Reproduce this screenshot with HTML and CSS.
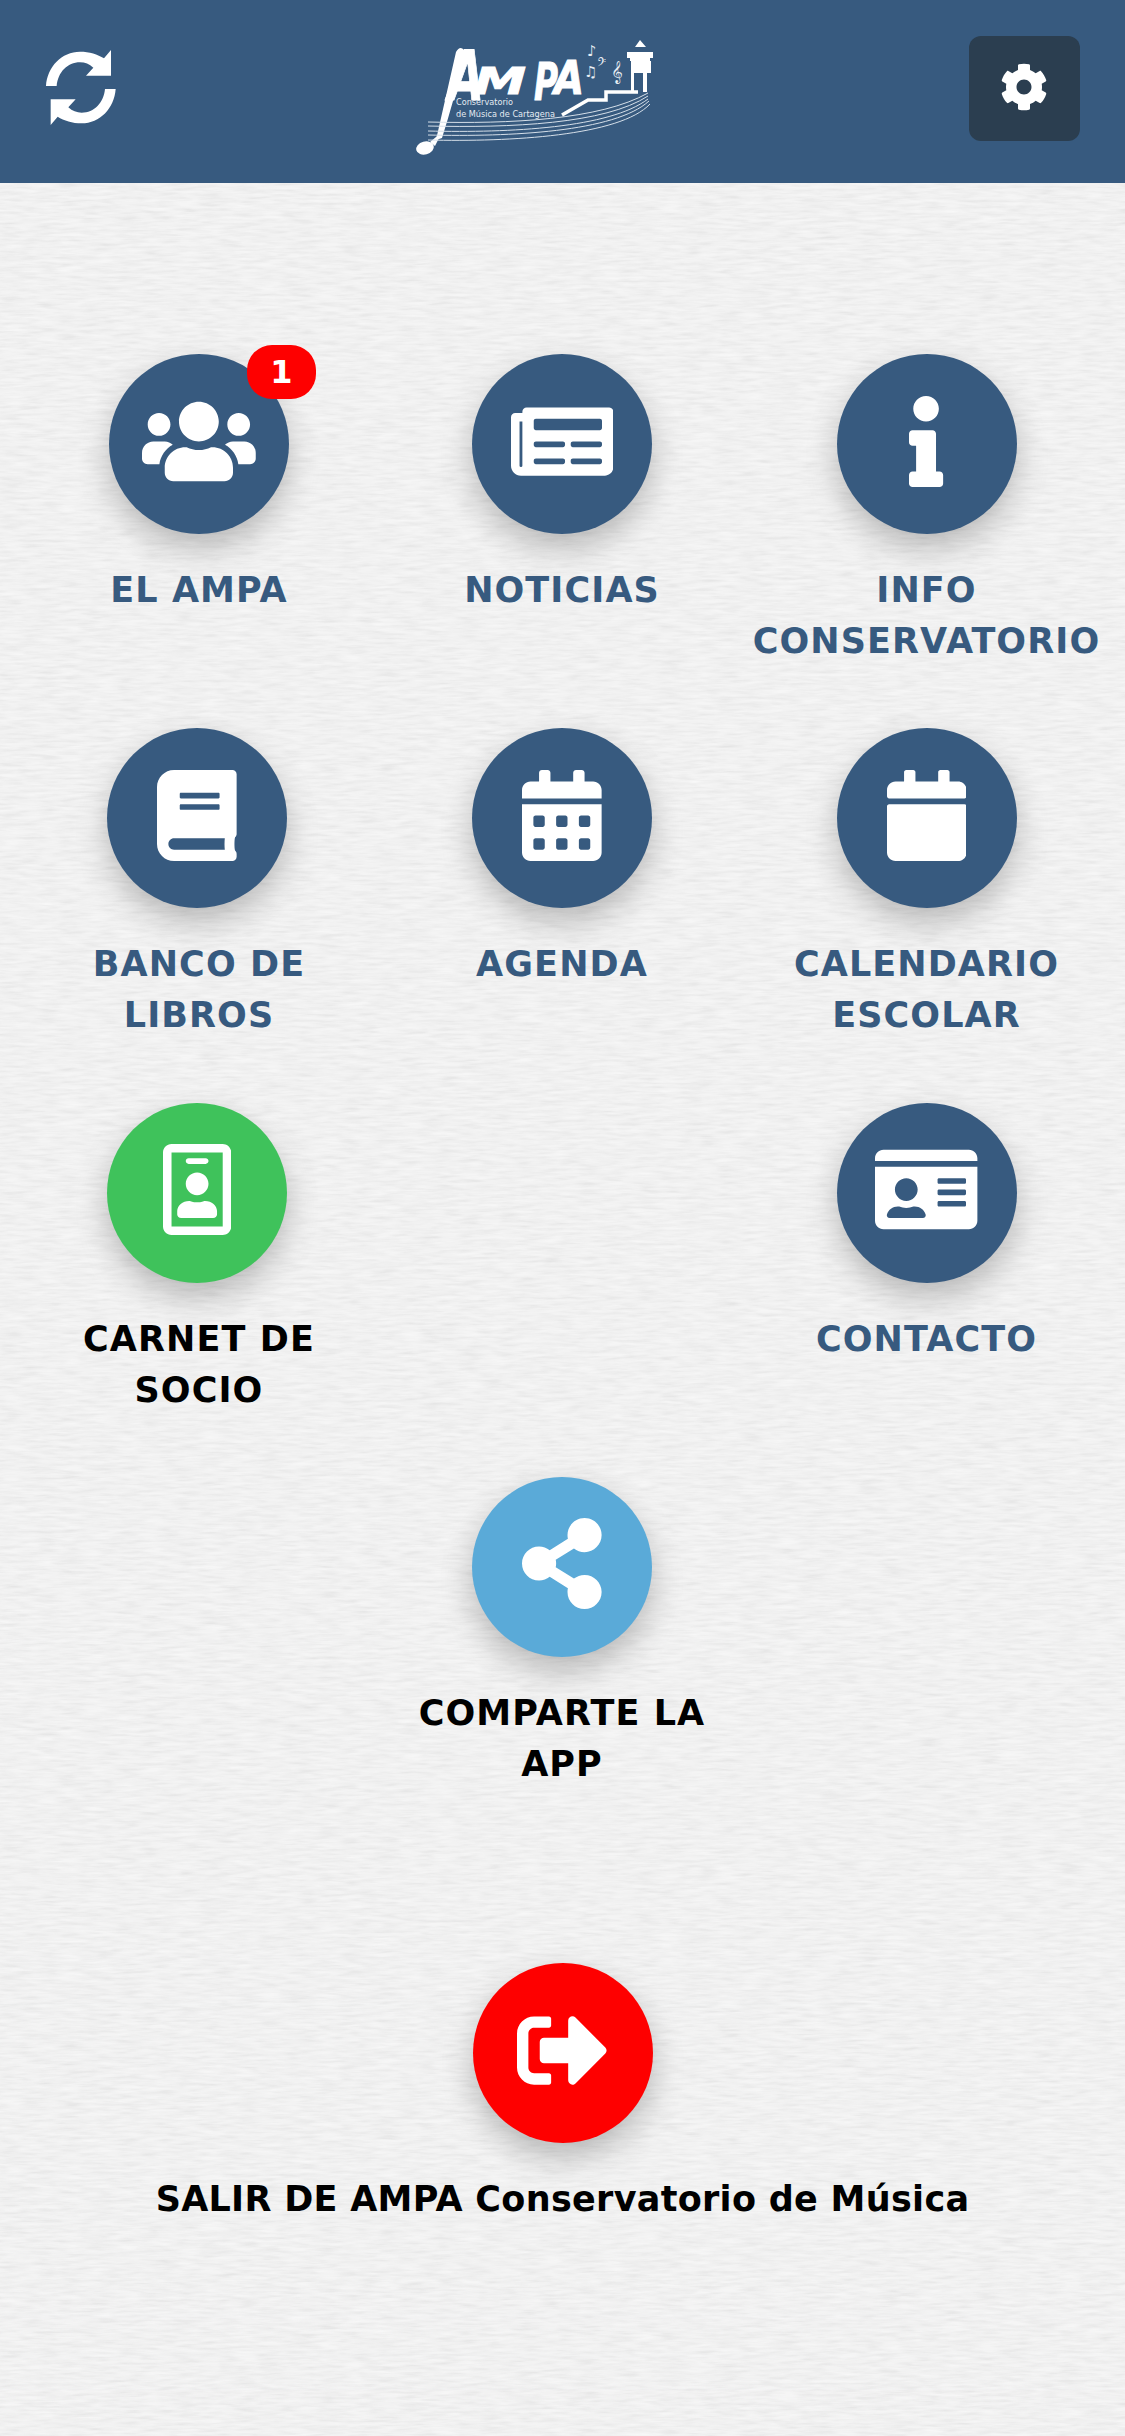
FILE: index.html
```html
<!doctype html>
<html>
<head>
<title>AMPA Conservatorio</title>
<meta charset="utf-8">
<meta name="viewport" content="width=device-width, initial-scale=1">
<link rel="stylesheet" href="styles.css">
</head>
<body>
<header class="topbar">
	<svg class="refresh" viewBox="0 0 300 300">
		<path d="M48 153C52 95 95 50 150 50C178 50 203 58 222 70L243 45V122H168L190 98C178 87 165 82 150 82C112 82 84 112 80 153Z"/>
		<path transform="rotate(180 152.5 157.5)" d="M48 153C52 95 95 50 150 50C178 50 203 58 222 70L243 45V122H168L190 98C178 87 165 82 150 82C112 82 84 112 80 153Z"/>
	</svg>
	<svg class="logo" viewBox="0 0 300 150">
		<path class="logo-fill" d="M76 32 Q80 25 84 30 L90 42 L82 46 Q74 80 62 118 L56 120 Q66 76 76 32z"/>
		<ellipse class="logo-fill" cx="45" cy="128" rx="9" ry="6.5" transform="rotate(-15 45 128)"/>
		<path class="logo-fill" d="M62 112 L55 126 L50 122z"/>
		<text class="logo-big" x="68" y="80" font-size="70" textLength="36" lengthAdjust="spacingAndGlyphs">A</text>
		<text class="logo-big" x="94" y="74" font-size="38" textLength="52" lengthAdjust="spacingAndGlyphs">M</text>
		<text class="logo-big" x="154" y="80" font-size="52" textLength="24" lengthAdjust="spacingAndGlyphs">P</text>
		<text class="logo-big" x="174" y="74" font-size="46" textLength="30" lengthAdjust="spacingAndGlyphs">A</text>
		<text class="logo-small" x="76" y="85" textLength="57" lengthAdjust="spacingAndGlyphs">Conservatorio</text>
		<text class="logo-small" x="76" y="97" textLength="99" lengthAdjust="spacingAndGlyphs">de Música de Cartagena</text>
		<g class="logo-staff">
			<path d="M48 102 C130 104 220 100 268 73"/>
			<path d="M48 106 C130 108 225 104 268 76"/>
			<path d="M48 111 C130 113 230 108 268 79"/>
			<path d="M48 115 C130 117 235 112 269 81"/>
			<path d="M48 120 C130 122 240 116 270 84"/>
		</g>
		<path class="logo-stair" d="M182 95 L208 80 L226 80 L226 72 L258 72"/>
		<path class="logo-fill" d="M255 27 L260 20 L266 27z M247 32 H273 V38 H270 V41 H271 V53 H267 V72 H263 V53 H254 V72 H251 V41 H250 V38 H247z"/>
		<text class="logo-note" x="207" y="36" font-size="15">♪</text>
		<text class="logo-note" x="204" y="57" font-size="15">♫</text>
		<text class="logo-note" x="217" y="48" font-size="14">𝄢</text>
		<text class="logo-note" x="231" y="58" font-size="20">𝄞</text>
	</svg>
	<button class="gear-btn" type="button">
		<svg class="gear" viewBox="0 0 512 512"><path d="M487.4 315.7l-42.6-24.6c4.3-23.2 4.3-47 0-70.2l42.6-24.6c4.9-2.8 7.1-8.6 5.5-14-11.1-35.6-30-67.8-54.7-94.6-3.8-4.1-10-5.1-14.8-2.3L380.8 110c-17.9-15.4-38.5-27.3-60.8-35.1V25.8c0-5.6-3.9-10.5-9.4-11.7-36.7-8.2-74.3-7.8-109.2 0-5.5 1.2-9.4 6.1-9.4 11.7V75c-22.2 7.9-42.8 19.8-60.8 35.1L88.7 85.5c-4.9-2.8-11-1.9-14.8 2.3-24.7 26.7-43.6 58.9-54.7 94.6-1.7 5.4.6 11.2 5.5 14L67.3 221c-4.3 23.2-4.3 47 0 70.2l-42.6 24.6c-4.9 2.8-7.1 8.6-5.5 14 11.1 35.6 30 67.8 54.7 94.6 3.8 4.1 10 5.1 14.8 2.3l42.6-24.6c17.9 15.4 38.5 27.3 60.8 35.1v49.2c0 5.6 3.9 10.5 9.4 11.7 36.7 8.2 74.3 7.8 109.2 0 5.5-1.2 9.4-6.1 9.4-11.7v-49.2c22.2-7.9 42.8-19.8 60.8-35.1l42.6 24.6c4.9 2.8 11 1.9 14.8-2.3 24.7-26.7 43.6-58.9 54.7-94.6 1.5-5.5-.7-11.3-5.6-14.1zM256 336c-44.1 0-80-35.9-80-80s35.9-80 80-80 80 35.9 80 80-35.9 80-80 80z"/></svg>
	</button>
</header>

<main class="menu">
	<div class="grid">
		<div class="tile">
			<div class="circle">
				<svg class="icon" viewBox="0 0 640 512"><path d="M96 224c35.3 0 64-28.7 64-64s-28.7-64-64-64-64 28.7-64 64 28.7 64 64 64zm448 0c35.3 0 64-28.7 64-64s-28.7-64-64-64-64 28.7-64 64 28.7 64 64 64zm32 32h-64c-17.6 0-33.5 7.1-45.1 18.6 40.3 22.1 68.9 62 75.1 109.4h66c17.7 0 32-14.3 32-32v-32c0-35.3-28.7-64-64-64zm-256 0c61.9 0 112-50.1 112-112S381.9 32 320 32 208 82.1 208 144s50.1 112 112 112zm76.8 32h-8.3c-20.8 10-43.9 16-68.5 16s-47.6-6-68.5-16h-8.3C179.6 288 128 339.6 128 403.2V432c0 26.5 21.5 48 48 48h288c26.5 0 48-21.5 48-48v-28.8c0-63.6-51.6-115.2-115.2-115.2zm-223.7-13.4C161.5 263.1 145.6 256 128 256H64c-35.3 0-64 28.7-64 64v32c0 17.7 14.3 32 32 32h65.9c6.3-47.4 34.9-87.3 75.2-109.4z"/></svg>
				<span class="badge">1</span>
			</div>
			<p class="label">EL AMPA</p>
		</div>
		<div class="tile">
			<div class="circle">
				<svg class="icon" viewBox="0 0 576 512"><path d="M552 64H88c-13.255 0-24 10.745-24 24v8H24c-13.255 0-24 10.745-24 24v272c0 30.928 25.072 56 56 56h472c26.51 0 48-21.49 48-48V88c0-13.255-10.745-24-24-24zM56 400a8 8 0 0 1-8-8V144h16v248a8 8 0 0 1-8 8zm236-16H140c-6.627 0-12-5.373-12-12v-8c0-6.627 5.373-12 12-12h152c6.627 0 12 5.373 12 12v8c0 6.627-5.373 12-12 12zm208 0H348c-6.627 0-12-5.373-12-12v-8c0-6.627 5.373-12 12-12h152c6.627 0 12 5.373 12 12v8c0 6.627-5.373 12-12 12zm-208-96H140c-6.627 0-12-5.373-12-12v-8c0-6.627 5.373-12 12-12h152c6.627 0 12 5.373 12 12v8c0 6.627-5.373 12-12 12zm208 0H348c-6.627 0-12-5.373-12-12v-8c0-6.627 5.373-12 12-12h152c6.627 0 12 5.373 12 12v8c0 6.627-5.373 12-12 12zm0-96H140c-6.627 0-12-5.373-12-12v-40c0-6.627 5.373-12 12-12h360c6.627 0 12 5.373 12 12v40c0 6.627-5.373 12-12 12z"/></svg>
			</div>
			<p class="label">NOTICIAS</p>
		</div>
		<div class="tile">
			<div class="circle">
				<svg class="icon" viewBox="0 0 192 512"><path d="M20 424.229h20V279.771H20c-11.046 0-20-8.954-20-20V212c0-11.046 8.954-20 20-20h112c11.046 0 20 8.954 20 20v212.229h20c11.046 0 20 8.954 20 20V492c0 11.046-8.954 20-20 20H20c-11.046 0-20-8.954-20-20v-47.771c0-11.046 8.954-20 20-20zM96 0C56.235 0 24 32.235 24 72s32.235 72 72 72 72-32.235 72-72S135.764 0 96 0z"/></svg>
			</div>
			<p class="label">INFO<br>CONSERVATORIO</p>
		</div>

		<div class="tile">
			<div class="circle nudge">
				<svg class="icon" viewBox="0 0 448 512"><path d="M448 360V24c0-13.3-10.7-24-24-24H96C43 0 0 43 0 96v320c0 53 43 96 96 96h328c13.3 0 24-10.7 24-24v-16c0-7.5-3.5-14.3-8.9-18.7-4.2-15.4-4.2-59.3 0-74.7 5.4-4.3 8.9-11.1 8.9-18.6zM128 134c0-3.3 2.7-6 6-6h212c3.3 0 6 2.7 6 6v20c0 3.3-2.7 6-6 6H134c-3.3 0-6-2.7-6-6v-20zm0 64c0-3.3 2.7-6 6-6h212c3.3 0 6 2.7 6 6v20c0 3.3-2.7 6-6 6H134c-3.3 0-6-2.7-6-6v-20zm253.4 250H96c-17.7 0-32-14.3-32-32 0-17.6 14.4-32 32-32h285.4c-1.9 17.1-1.9 46.9 0 64z"/></svg>
			</div>
			<p class="label">BANCO DE<br>LIBROS</p>
		</div>
		<div class="tile">
			<div class="circle">
				<svg class="icon" viewBox="0 0 448 512"><path d="M0 464c0 26.5 21.5 48 48 48h352c26.5 0 48-21.5 48-48V192H0v272zm320-196c0-6.6 5.4-12 12-12h40c6.6 0 12 5.4 12 12v40c0 6.6-5.4 12-12 12h-40c-6.6 0-12-5.4-12-12v-40zm0 128c0-6.6 5.4-12 12-12h40c6.6 0 12 5.4 12 12v40c0 6.6-5.4 12-12 12h-40c-6.6 0-12-5.4-12-12v-40zM192 268c0-6.6 5.4-12 12-12h40c6.6 0 12 5.4 12 12v40c0 6.6-5.4 12-12 12h-40c-6.6 0-12-5.4-12-12v-40zm0 128c0-6.6 5.4-12 12-12h40c6.6 0 12 5.4 12 12v40c0 6.6-5.4 12-12 12h-40c-6.6 0-12-5.4-12-12v-40zM64 268c0-6.6 5.4-12 12-12h40c6.6 0 12 5.4 12 12v40c0 6.6-5.4 12-12 12H76c-6.6 0-12-5.4-12-12v-40zm0 128c0-6.6 5.4-12 12-12h40c6.6 0 12 5.4 12 12v40c0 6.6-5.4 12-12 12H76c-6.6 0-12-5.4-12-12v-40zM400 64h-48V16c0-8.8-7.2-16-16-16h-32c-8.8 0-16 7.2-16 16v48H160V16c0-8.8-7.2-16-16-16h-32c-8.8 0-16 7.2-16 16v48H48C21.5 64 0 85.5 0 112v48h448v-48c0-26.5-21.5-48-48-48z"/></svg>
			</div>
			<p class="label">AGENDA</p>
		</div>
		<div class="tile">
			<div class="circle">
				<svg class="icon" viewBox="0 0 448 512"><path d="M12 192h424c6.6 0 12 5.4 12 12v260c0 26.5-21.5 48-48 48H48c-26.5 0-48-21.5-48-48V204c0-6.6 5.4-12 12-12zm436-44v-36c0-26.5-21.5-48-48-48h-48V12c0-6.6-5.4-12-12-12h-40c-6.6 0-12 5.4-12 12v52H160V12c0-6.6-5.4-12-12-12h-40c-6.6 0-12 5.4-12 12v52H48C21.5 64 0 85.5 0 112v36c0 6.6 5.4 12 12 12h424c6.6 0 12-5.4 12-12z"/></svg>
			</div>
			<p class="label">CALENDARIO<br>ESCOLAR</p>
		</div>

		<div class="tile">
			<div class="circle nudge green">
				<svg class="icon" viewBox="0 0 384 512"><path d="M336 0H48C21.5 0 0 21.5 0 48v416c0 26.5 21.5 48 48 48h288c26.5 0 48-21.5 48-48V48c0-26.5-21.5-48-48-48zm0 464H48V48h288v416zM144 112h96c8.8 0 16-7.2 16-16s-7.2-16-16-16h-96c-8.8 0-16 7.2-16 16s7.2 16 16 16zm48 176c35.3 0 64-28.7 64-64s-28.7-64-64-64-64 28.7-64 64 28.7 64 64 64zm-89.6 128h179.2c12.4 0 22.4-8.6 22.4-19.2v-19.2c0-31.8-30.1-57.6-67.2-57.6-10.8 0-18.7 8-44.8 8-26.9 0-33.4-8-44.8-8-37.1 0-67.2 25.8-67.2 57.6v19.2c0 10.6 10 19.2 22.4 19.2z"/></svg>
			</div>
			<p class="label dark">CARNET DE<br>SOCIO</p>
		</div>
		<div class="tile"></div>
		<div class="tile">
			<div class="circle">
				<svg class="icon" viewBox="0 0 576 512"><path d="M528 32H48C21.5 32 0 53.5 0 80v16h576V80c0-26.5-21.5-48-48-48zM0 432c0 26.5 21.5 48 48 48h480c26.5 0 48-21.5 48-48V128H0v304zm352-232c0-4.4 3.6-8 8-8h144c4.4 0 8 3.6 8 8v16c0 4.4-3.6 8-8 8H360c-4.4 0-8-3.6-8-8v-16zm0 64c0-4.4 3.6-8 8-8h144c4.4 0 8 3.6 8 8v16c0 4.4-3.6 8-8 8H360c-4.4 0-8-3.6-8-8v-16zm0 64c0-4.4 3.6-8 8-8h144c4.4 0 8 3.6 8 8v16c0 4.4-3.6 8-8 8H360c-4.4 0-8-3.6-8-8v-16zM176 192c35.3 0 64 28.7 64 64s-28.7 64-64 64-64-28.7-64-64 28.7-64 64-64zM67.1 396.2C75.5 370.5 99.6 352 128 352h8.2c12.3 5.1 25.7 8 39.8 8s27.6-2.9 39.8-8h8.2c28.4 0 52.5 18.5 60.9 44.2 3.2 9.9-5.2 19.8-15.6 19.8H82.7c-10.4 0-18.8-10-15.6-19.8z"/></svg>
			</div>
			<p class="label">CONTACTO</p>
		</div>

		<div class="tile"></div>
		<div class="tile">
			<div class="circle blue">
				<svg class="icon" viewBox="0 0 448 512"><path d="M352 320c-22.608 0-43.387 7.819-59.79 20.895l-102.486-64.054a96.551 96.551 0 0 0 0-41.683l102.486-64.054C308.613 184.181 329.392 192 352 192c53.019 0 96-42.981 96-96S405.019 0 352 0s-96 42.981-96 96c0 7.158.79 14.13 2.276 20.841L155.79 180.895C139.387 167.819 118.608 160 96 160c-53.019 0-96 42.981-96 96s42.981 96 96 96c22.608 0 43.387-7.819 59.79-20.895l102.486 64.054A96.301 96.301 0 0 0 256 416c0 53.019 42.981 96 96 96s96-42.981 96-96-42.981-96-96-96z"/></svg>
			</div>
			<p class="label dark">COMPARTE LA<br>APP</p>
		</div>
		<div class="tile"></div>
	</div>

	<div class="exit">
		<div class="circle red">
			<svg class="icon" viewBox="0 0 512 512"><path d="M497 273L329 441c-15 15-41 4.5-41-17v-96H152c-13.3 0-24-10.7-24-24v-96c0-13.3 10.7-24 24-24h136V88c0-21.4 25.9-32 41-17l168 168c9.3 9.4 9.3 24.6 0 34zM192 436v-40c0-6.6-5.4-12-12-12H96c-17.7 0-32-14.3-32-32V160c0-17.7 14.3-32 32-32h84c6.6 0 12-5.4 12-12V76c0-6.6-5.4-12-12-12H96c-53 0-96 43-96 96v192c0 53 43 96 96 96h84c6.6 0 12-5.4 12-12z"/></svg>
		</div>
		<p class="label dark wide">SALIR DE AMPA Conservatorio de Música</p>
	</div>
</main>
</body>
</html>
```

FILE: styles.css
```css
html, body {
	margin: 0;
	padding: 0;
}
body {
	min-height: 2436px;
	overflow: hidden;
	font-family: "DejaVu Sans", sans-serif;
	background-color: #efefef;
	background-image: url("data:image/svg+xml,%3Csvg xmlns='http://www.w3.org/2000/svg' width='1125' height='2436'%3E%3Cfilter id='n' x='0' y='0' width='100%25' height='100%25'%3E%3CfeTurbulence type='fractalNoise' baseFrequency='0.035 0.3' numOctaves='3' seed='4'/%3E%3CfeColorMatrix values='0 0 0 0 1 0 0 0 0 1 0 0 0 0 1 0.8 0 0 0 -0.2'/%3E%3C/filter%3E%3Cfilter id='d' x='0' y='0' width='100%25' height='100%25'%3E%3CfeTurbulence type='fractalNoise' baseFrequency='0.05 0.35' numOctaves='2' seed='9'/%3E%3CfeColorMatrix values='0 0 0 0 0.6 0 0 0 0 0.6 0 0 0 0 0.6 0.6 0 0 0 -0.24'/%3E%3C/filter%3E%3Crect width='1125' height='2436' filter='url(%23d)'/%3E%3Crect width='1125' height='2436' filter='url(%23n)'/%3E%3C/svg%3E");
}

.topbar {
	display: flex;
	align-items: center;
	height: 183px;
	padding: 0 45px 0 30px;
	background: #375a7f;
}
.refresh {
	width: 100px;
	height: 100px;
	margin-top: -13px;
	fill: #fff;
}
.logo {
	width: 300px;
	height: 150px;
	margin: 7px 0 0 250px;
}
.logo-fill {
	fill: #fff;
}
.logo-big {
	fill: #fff;
	stroke: #fff;
	stroke-width: 1;
	font-family: "DejaVu Sans", sans-serif;
	font-weight: bold;
	font-style: italic;
}
.logo-small {
	fill: #e4ebf2;
	font-family: "DejaVu Sans", sans-serif;
	font-size: 8px;
}
.logo-note {
	fill: #e8eef4;
	font-family: "DejaVu Sans", sans-serif;
}
.logo-staff path {
	fill: none;
	stroke: #d5dfe9;
	stroke-width: 1;
}
.logo-stair {
	fill: none;
	stroke: #fff;
	stroke-width: 3.5;
}
.gear-btn {
	display: flex;
	align-items: center;
	justify-content: center;
	width: 111px;
	height: 105px;
	margin: -6px 0 0 auto;
	padding: 0 2px 3px 0;
	border: 0;
	border-radius: 12px;
	background: #2b3e50;
}
.gear {
	width: 48px;
	height: 48px;
	fill: #fff;
}

.menu {
	padding-top: 171px;
}
.grid {
	display: grid;
	grid-template-columns: 364px 362px 367px;
	grid-auto-rows: 374.33px;
	padding-left: 17px;
}
.tile {
	display: flex;
	flex-direction: column;
	align-items: center;
}
.circle {
	position: relative;
	display: flex;
	flex: none;
	align-items: center;
	justify-content: center;
	box-sizing: border-box;
	width: 180px;
	height: 180px;
	padding-bottom: 6px;
	border-radius: 50%;
	background: #375a7f;
	box-shadow: 0 14px 32px rgba(0, 0, 0, .24);
}
.nudge {
	margin-right: 4px;
}
.green {
	background: #3fc25b;
}
.blue {
	background: #5aaad8;
}
.red {
	background: #fe0000;
}
.icon {
	height: 91px;
	fill: #fff;
}
.badge {
	position: absolute;
	top: -9px;
	left: 138px;
	width: 69px;
	height: 54px;
	border-radius: 25px;
	background: #fe0000;
	color: #fff;
	font-size: 32px;
	font-weight: bold;
	line-height: 54px;
	text-align: center;
}
.label {
	width: 362px;
	margin: 31px 0 0;
	color: #375a7f;
	font-size: 35px;
	font-weight: bold;
	letter-spacing: 1.1px;
	line-height: 51px;
	text-align: center;
}
.dark {
	color: #000;
}
.exit {
	display: flex;
	flex-direction: column;
	align-items: center;
	margin-top: 112px;
}
.wide {
	width: auto;
	letter-spacing: .3px;
	white-space: nowrap;
}
```
